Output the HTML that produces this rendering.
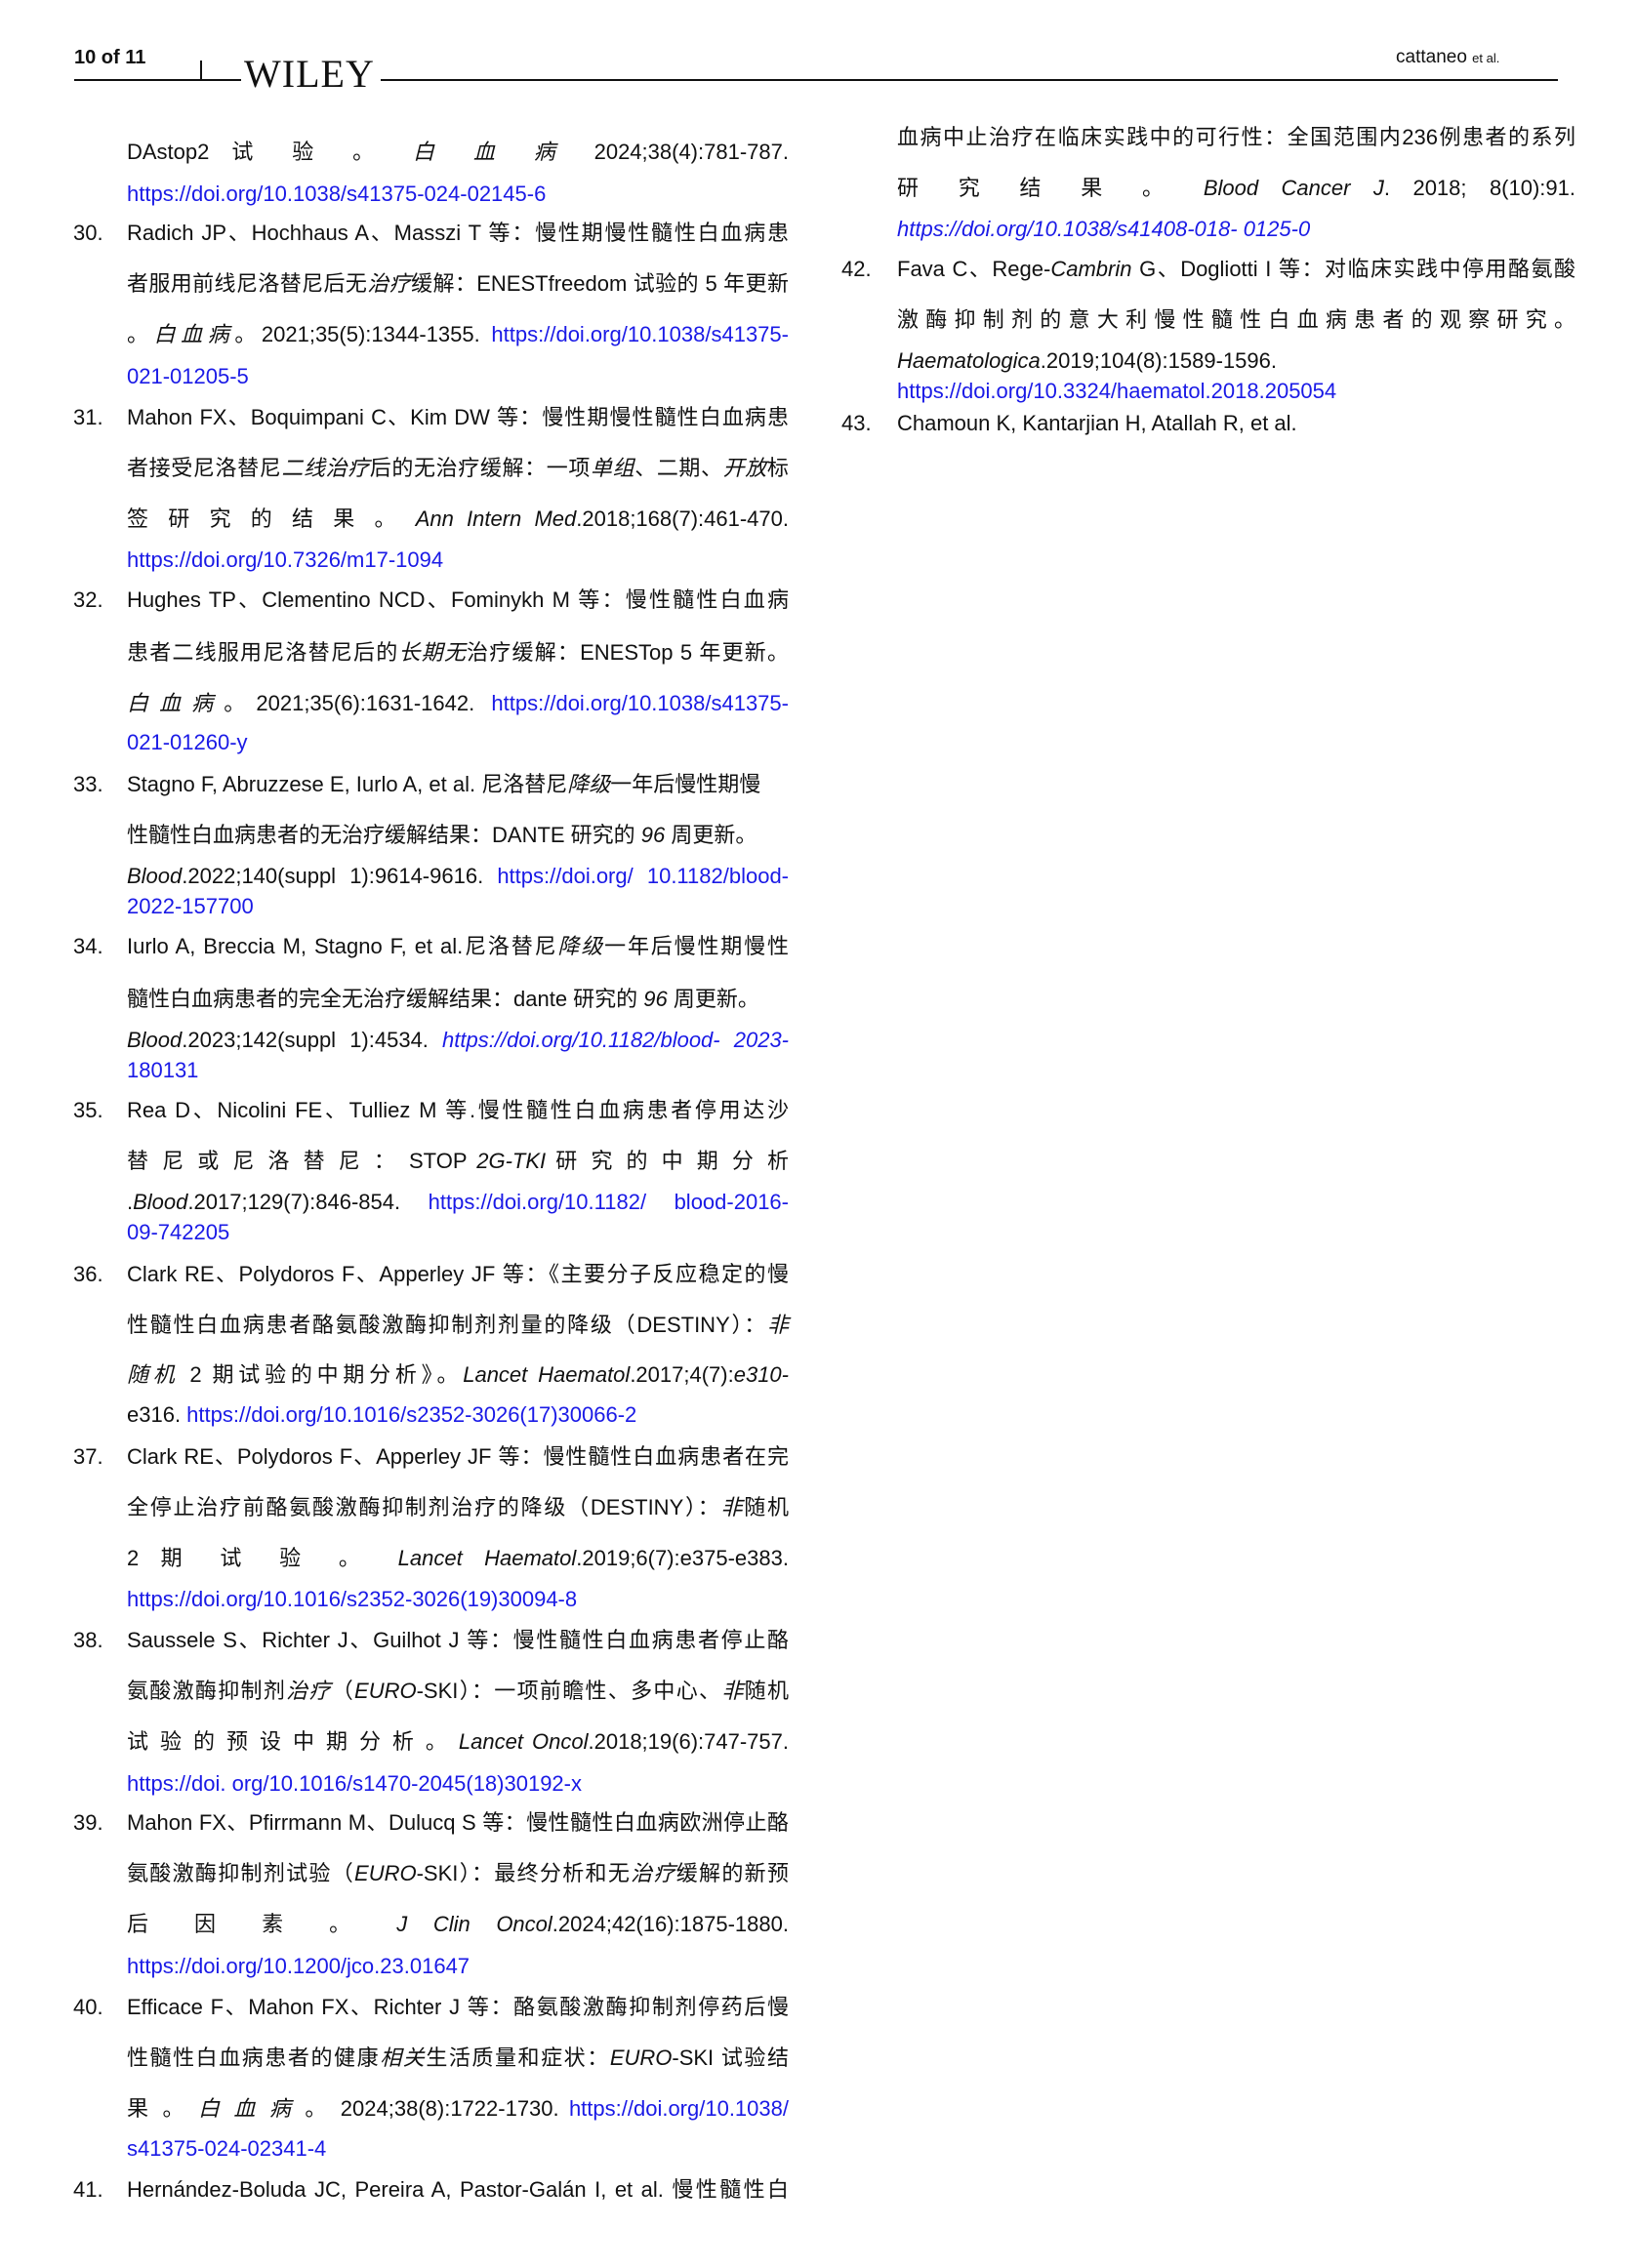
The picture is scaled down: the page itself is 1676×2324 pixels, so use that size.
<!DOCTYPE html>
<html><head><meta charset="utf-8"><style>
body{margin:0;width:1676px;height:2324px;background:#fff;position:relative;overflow:hidden;font-family:"Liberation Sans","Noto Sans CJK SC",sans-serif;color:#111;}
.l{position:absolute;height:32px;line-height:32px;font-size:22px;white-space:nowrap;}
.L{left:130px;width:678px;}
.R{left:919px;width:695px;}
.j{text-align:justify;text-align-last:justify;}
.n{position:absolute;font-size:22px;height:32px;line-height:32px;}
a,.a{color:#1a1ae6;text-decoration:none;}
i{font-style:italic;}
</style></head><body>
<div style="position:absolute;left:76px;top:48px;font-size:20px;font-weight:bold;">10 of 11</div>
<div style="position:absolute;left:76px;top:81px;width:171px;height:2px;background:#111"></div>
<div style="position:absolute;left:205px;top:62px;width:2px;height:20px;background:#111"></div>
<div style="position:absolute;left:250px;top:52px;font-family:'Liberation Serif',serif;font-size:40px;letter-spacing:1px;">WILEY</div>
<div style="position:absolute;left:390px;top:81px;width:1206px;height:2px;background:#111"></div>
<div style="position:absolute;left:1430px;top:48px;font-size:19px;">cattaneo <span style="font-size:13px">et al.</span></div>

<div class="l L j" style="top:140px">DAstop2 试 验 。 <i>白 血 病</i> 2024;38(4):781-787.</div>
<div class="l L a" style="top:183px">https://doi.org/10.1038/s41375-024-02145-6</div>

<div class="n" style="left:75px;top:223px">30.</div>
<div class="l L j" style="top:223px">Radich JP、Hochhaus A、Masszi T 等：慢性期慢性髓性白血病患</div>
<div class="l L j" style="top:275px">者服用前线尼洛替尼后无<i>治疗</i>缓解：ENESTfreedom 试验的 5 年更新</div>
<div class="l L j" style="top:327px">。<i>白血病</i>。2021;35(5):1344-1355. <span class="a">https://doi.org/10.1038/s41375-</span></div>
<div class="l L a" style="top:370px">021-01205-5</div>

<div class="n" style="left:75px;top:412px">31.</div>
<div class="l L j" style="top:412px">Mahon FX、Boquimpani C、Kim DW 等：慢性期慢性髓性白血病患</div>
<div class="l L j" style="top:464px">者接受尼洛替尼<i>二线治疗</i>后的无治疗缓解：一项<i>单组</i>、二期、<i>开放</i>标</div>
<div class="l L j" style="top:516px">签 研 究 的 结 果 。 <i>Ann Intern Med</i>.2018;168(7):461-470.</div>
<div class="l L a" style="top:558px">https://doi.org/10.7326/m17-1094</div>

<div class="n" style="left:75px;top:599px">32.</div>
<div class="l L j" style="top:599px">Hughes TP、Clementino NCD、Fominykh M 等：慢性髓性白血病</div>
<div class="l L j" style="top:653px">患者二线服用尼洛替尼后的<i>长期无</i>治疗缓解：ENESTop 5 年更新。</div>
<div class="l L j" style="top:705px"><i>白血病</i>。2021;35(6):1631-1642. <span class="a">https://doi.org/10.1038/s41375-</span></div>
<div class="l L a" style="top:745px">021-01260-y</div>

<div class="n" style="left:75px;top:788px">33.</div>
<div class="l L" style="top:788px">Stagno F, Abruzzese E, Iurlo A, et al. 尼洛替尼<i>降级</i>一年后慢性期慢</div>
<div class="l L" style="top:840px">性髓性白血病患者的无治疗缓解结果：DANTE 研究的 <i>96</i> 周更新。</div>
<div class="l L j" style="top:882px"><i>Blood</i>.2022;140(suppl 1):9614-9616. <span class="a">https://doi.org/ 10.1182/blood-</span></div>
<div class="l L a" style="top:913px">2022-157700</div>

<div class="n" style="left:75px;top:954px">34.</div>
<div class="l L j" style="top:954px">Iurlo A, Breccia M, Stagno F, et al.尼洛替尼<i>降级</i>一年后慢性期慢性</div>
<div class="l L" style="top:1008px">髓性白血病患者的完全无治疗缓解结果：dante 研究的 <i>96</i> 周更新。</div>
<div class="l L j" style="top:1050px"><i>Blood</i>.2023;142(suppl 1):4534. <i class="a">https://doi.org/10.1182/blood- 2023-</i></div>
<div class="l L a" style="top:1081px">180131</div>

<div class="n" style="left:75px;top:1122px">35.</div>
<div class="l L j" style="top:1122px">Rea D、Nicolini FE、Tulliez M 等.慢性髓性白血病患者停用达沙</div>
<div class="l L j" style="top:1174px">替 尼 或 尼 洛 替 尼 ： STOP <i>2G-TKI</i> 研 究 的 中 期 分 析</div>
<div class="l L j" style="top:1216px">.<i>Blood</i>.2017;129(7):846-854. <span class="a">https://doi.org/10.1182/ blood-2016-</span></div>
<div class="l L a" style="top:1247px">09-742205</div>

<div class="n" style="left:75px;top:1290px">36.</div>
<div class="l L j" style="top:1290px">Clark RE、Polydoros F、Apperley JF 等：《主要分子反应稳定的慢</div>
<div class="l L j" style="top:1342px">性髓性白血病患者酪氨酸激酶抑制剂剂量的降级（DESTINY）：<i>非</i></div>
<div class="l L j" style="top:1393px"><i>随机</i> 2 期试验的中期分析》。<i>Lancet Haematol</i>.2017;4(7):<i>e310-</i></div>
<div class="l L" style="top:1434px">e316. <span class="a">https://doi.org/10.1016/s2352-3026(17)30066-2</span></div>

<div class="n" style="left:75px;top:1477px">37.</div>
<div class="l L j" style="top:1477px">Clark RE、Polydoros F、Apperley JF 等：慢性髓性白血病患者在完</div>
<div class="l L j" style="top:1529px">全停止治疗前酪氨酸激酶抑制剂治疗的降级（DESTINY）：<i>非</i>随机</div>
<div class="l L j" style="top:1581px">2 期 试 验 。 <i>Lancet Haematol</i>.2019;6(7):e375-e383.</div>
<div class="l L a" style="top:1623px">https://doi.org/10.1016/s2352-3026(19)30094-8</div>

<div class="n" style="left:75px;top:1665px">38.</div>
<div class="l L j" style="top:1665px">Saussele S、Richter J、Guilhot J 等：慢性髓性白血病患者停止酪</div>
<div class="l L j" style="top:1717px">氨酸激酶抑制剂<i>治疗</i>（<i>EURO</i>-SKI）：一项前瞻性、多中心、<i>非</i>随机</div>
<div class="l L j" style="top:1769px">试 验 的 预 设 中 期 分 析 。 <i>Lancet Oncol</i>.2018;19(6):747-757.</div>
<div class="l L a" style="top:1812px">https://doi. org/10.1016/s1470-2045(18)30192-x</div>

<div class="n" style="left:75px;top:1852px">39.</div>
<div class="l L j" style="top:1852px">Mahon FX、Pfirrmann M、Dulucq S 等：慢性髓性白血病欧洲停止酪</div>
<div class="l L j" style="top:1904px">氨酸激酶抑制剂试验（<i>EURO</i>-SKI）：最终分析和无<i>治疗</i>缓解的新预</div>
<div class="l L j" style="top:1956px">后 因 素 。 <i>J Clin Oncol</i>.2024;42(16):1875-1880.</div>
<div class="l L a" style="top:1999px">https://doi.org/10.1200/jco.23.01647</div>

<div class="n" style="left:75px;top:2041px">40.</div>
<div class="l L j" style="top:2041px">Efficace F、Mahon FX、Richter J 等：酪氨酸激酶抑制剂停药后慢</div>
<div class="l L j" style="top:2093px">性髓性白血病患者的健康<i>相关</i>生活质量和症状：<i>EURO</i>-SKI 试验结</div>
<div class="l L j" style="top:2145px">果 。 <i>白 血 病</i> 。 2024;38(8):1722-1730. <span class="a">https://doi.org/10.1038/</span></div>
<div class="l L a" style="top:2186px">s41375-024-02341-4</div>

<div class="n" style="left:75px;top:2228px">41.</div>
<div class="l L j" style="top:2228px">Hernández-Boluda JC, Pereira A, Pastor-Galán I, et al. 慢性髓性白</div>

<div class="l R j" style="top:125px">血病中止治疗在临床实践中的可行性：全国范围内236例患者的系列</div>
<div class="l R j" style="top:177px">研 究 结 果 。 <i>Blood Cancer J</i>. 2018; 8(10):91.</div>
<div class="l R" style="top:219px"><i class="a">https://doi.org/10.1038/s41408-018- 0125-0</i></div>
<div class="n" style="left:862px;top:260px">42.</div>
<div class="l R j" style="top:260px">Fava C、Rege-<i>Cambrin</i> G、Dogliotti I 等：对临床实践中停用酪氨酸</div>
<div class="l R j" style="top:312px">激酶抑制剂的意大利慢性髓性白血病患者的观察研究。</div>
<div class="l R" style="top:354px"><i>Haematologica</i>.2019;104(8):1589-1596.</div>
<div class="l R a" style="top:385px">https://doi.org/10.3324/haematol.2018.205054</div>
<div class="n" style="left:862px;top:418px">43.</div>
<div class="l R" style="top:418px">Chamoun K, Kantarjian H, Atallah R, et al.</div>
</body></html>
